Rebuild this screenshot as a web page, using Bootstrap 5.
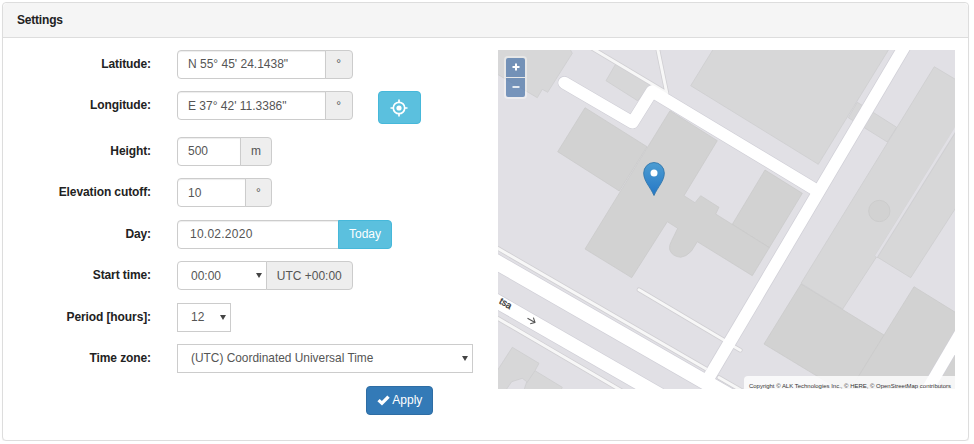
<!DOCTYPE html>
<html lang="en">
<head>
<meta charset="utf-8">
<title>Settings</title>
<meta name="viewport" content="width=device-width, initial-scale=1">
<link href="https://cdn.jsdelivr.net/npm/bootstrap@5.3.0/dist/css/bootstrap.min.css" rel="stylesheet">
<style>
body{font-family:"Liberation Sans",Arial,sans-serif;font-size:12px;color:#333;overflow:hidden}
.settings-panel{margin:2px 5px 0 2px;height:439px;border:1px solid #ddd;border-radius:4px;box-shadow:0 1px 1px rgba(0,0,0,.05)}
.settings-panel>.card-header{height:34.5px;padding:0 14px;background:#f5f5f5;border-color:#ddd;color:#222;line-height:34px;letter-spacing:-.2px}
.settings-panel>.card-body{padding:12.1px 13px 0 14px}
.settings-form{width:481px;row-gap:12.5px}
.field-row{min-height:29px}
.field-label{width:134px;margin-right:26px;line-height:29px;text-align:right;letter-spacing:-.1px;font-weight:700;color:#222;white-space:nowrap}
.field-row .input-group{height:29px;flex-wrap:nowrap}
.field-row .form-control,.field-row .form-select{height:29px;min-height:0;padding:0 10px;font-size:12px;color:#555;border:1px solid #ccc;border-radius:4px;box-shadow:inset 0 1px 1px rgba(0,0,0,.075)}
.field-row .form-select{background-image:none;padding-left:13px;border-radius:0;box-shadow:none}
.field-row .w-zone .form-select{font-size:11.9px}
.field-row .form-control.coord{padding-left:10px}
.field-row .input-group-text{justify-content:center;padding:0;font-size:12px;color:#555;background:#eee;border:1px solid #ccc;border-radius:4px}
.w-coord{width:175.5px}.w-coord .input-group-text{width:27.5px}
.w-height{width:95px}.w-height .input-group-text{width:32px}
.w-elev{width:95px}.w-elev .input-group-text{width:27px}
.w-day{width:215px}.w-day .btn{width:54px;border-radius:4px}
.w-day .form-control{letter-spacing:.25px;padding-left:12px}
.w-start{width:175.5px}.w-start .input-group-text{width:86.5px}
.w-period{width:54px}.w-zone{width:296px}
.select-wrap{position:relative}
.select-wrap::after{content:"";position:absolute;right:5px;top:12px;border:3px solid transparent;border-top:5px solid #444;border-bottom:0;pointer-events:none}
.w-start .select-wrap .form-select{border-radius:4px 0 0 4px}
.btn-sky{background:#5bc0de;border:1px solid #46b8da;color:#fff;padding:0;font-size:12px}
.btn-locate{width:43px;height:33px;margin-left:25px;border-radius:4px}
.btn-apply{width:67px;height:29px;margin-left:349px;padding:0;background:#337ab7;border:1px solid #2e6da4;border-radius:4px;color:#fff;font-size:12px;line-height:27px}
.map-view{width:457px;height:339px;overflow:hidden;background:#e1e0e5;position:relative}
.map-view>svg{display:block}
.zoom-box{position:absolute;left:6px;top:6px;padding:2px;background:rgba(255,255,255,.4);border-radius:4px;display:grid;gap:1px}
.zoom-box button{width:19px;height:19px;border:0;padding:0;background:rgba(0,60,136,.5);display:flex;align-items:center;justify-content:center}
.zoom-box button:first-child{border-radius:2px 2px 0 0}
.zoom-box button:last-child{border-radius:0 0 2px 2px}
</style>
<script src="https://cdn.jsdelivr.net/npm/bootstrap@5.3.0/dist/js/bootstrap.bundle.min.js"></script>
</head>
<body>
<div class="card settings-panel">
  <div class="card-header fw-bold">Settings</div>
  <div class="card-body d-flex">
    <form class="settings-form d-flex flex-column flex-shrink-0">
      <div class="field-row d-flex"><label class="field-label">Latitude:</label>
        <div class="input-group w-coord"><input class="form-control coord" value="N 55° 45' 24.1438&quot;"><span class="input-group-text">°</span></div></div>
      <div class="field-row d-flex"><label class="field-label">Longitude:</label>
        <div class="input-group w-coord"><input class="form-control coord" value="E 37° 42' 11.3386&quot;"><span class="input-group-text">°</span></div>
        <button type="button" class="btn btn-sky btn-locate d-flex align-items-center justify-content-center" aria-label="Locate">
          <svg width="18" height="18" viewBox="0 0 18 18" fill="none" stroke="#fff"><circle cx="9" cy="9" r="5.7" stroke-width="1.7"/><circle cx="9" cy="9" r="2.6" fill="#fff" stroke="none"/><path d="M9 .5v3M9 14.5v3M.5 9h3M14.5 9h3" stroke-width="1.7"/></svg>
        </button></div>
      <div class="field-row d-flex"><label class="field-label">Height:</label>
        <div class="input-group w-height"><input class="form-control coord" value="500"><span class="input-group-text">m</span></div></div>
      <div class="field-row d-flex"><label class="field-label">Elevation cutoff:</label>
        <div class="input-group w-elev"><input class="form-control coord" value="10"><span class="input-group-text">°</span></div></div>
      <div class="field-row d-flex"><label class="field-label">Day:</label>
        <div class="input-group w-day"><input class="form-control" value="10.02.2020"><button type="button" class="btn btn-sky">Today</button></div></div>
      <div class="field-row d-flex"><label class="field-label">Start time:</label>
        <div class="input-group w-start"><div class="select-wrap flex-fill"><select class="form-select"><option>00:00</option></select></div><span class="input-group-text">UTC +00:00</span></div></div>
      <div class="field-row d-flex"><label class="field-label">Period [hours]:</label>
        <div class="select-wrap w-period"><select class="form-select"><option>12</option></select></div></div>
      <div class="field-row d-flex"><label class="field-label">Time zone:</label>
        <div class="select-wrap w-zone"><select class="form-select"><option>(UTC) Coordinated Universal Time</option></select></div></div>
      <div class="field-row d-flex"><button type="button" class="btn btn-apply"><svg width="13" height="11" viewBox="0 0 13 11"><path d="M.4 6.2 2.7 3.9 4.9 6.1 10.3.5 12.7 2.8 5 10.6Z" fill="#fff"/></svg> Apply</button></div>
    </form>
    <div class="map-view flex-shrink-0">
      <svg width="457" height="339" viewBox="498 50 457 339">
        <g fill="#d7d7d8" stroke="#cbcbcd" stroke-width=".7">
          <path d="M497 49H570L572.3 53.3 547.7 92.3 542.3 89.3 537.3 97.7 497 74Z"/>
          <path d="M615.7 64 606 80.7 637.5 100.7 652 84Z"/>
          <path d="M713.3 49 690.7 85.7 818.3 164.3 889 49Z"/>
          <path d="M857.3 102.3 896.7 127.3 887.3 142 848.3 117.7Z"/>
          <path d="M934.3 66.7 956 79.7V207.5L910.7 277.7 876.7 256.7 842.7 309 801 283.3Z"/>
          <path d="M512.3 347.3 539 363.3 535 370.7 562.3 387.3 561 390H524L526.7 381.7 522.3 378.3 511.7 381.7 506 390H497V371Z"/>
          <path d="M535 370.7 526.7 383"/>
        </g>
        <path d="M956 129 876 257" stroke="#cfcfd2" stroke-width="3.6"/>
        <path d="M956 128 876 256.5" stroke="#e1e0e5" stroke-width="2.4"/>
        <g fill="#d2d2d2" stroke="#c8c8c9" stroke-width=".7">
          <circle cx="879.3" cy="211" r="10.7"/>
          <path d="M585 107.7 647 146.7 619.3 191 557.7 151.7Z"/>
          <path d="M765 170 802.3 193.3 769.3 247.7 732.3 224.3Z"/>
          <path d="M670 110.7 717.3 140.7 684 195.7 695 202.7 700.7 195.7 719 207.3 715.7 214 769.3 247.7 752.3 275.7 697.3 241.7 691.5 251Q686 257 680.7 257.3 672 256.5 669.6 249.5 669 245 671.5 241L677.7 228.3 667.3 221.7 631.7 277.7 585 249Z"/>
          <path d="M801 284 884 335 914 286.7 956 312.7V390H840L764 344Z"/>
          <path d="M884 335 850 390"/>
        </g>
        <g fill="none" stroke-linejoin="round">
          <g stroke="#d0cfd3" stroke-width="4.6">
            <path d="M590 47 667 93M657.3 47 667 94M496 247.3 706.7 369.3M496 317.3 622 391"/>
            <path d="M639 289.7 725 340.7M719 377.5 745 392.5M733 346 740.3 350.2" stroke-linecap="round"/>
          </g>
          <g stroke="#cfced6">
            <path d="M564.3 82.7 632.5 122.5 652 91.3 815 189.5" stroke-width="13.2" stroke-linecap="round"/>
            <path d="M904.8 46 705 384" stroke-width="13.6"/>
            <path d="M494 260.7 734 398.5" stroke-width="16.4"/>
            <path d="M494 299.7 660 395" stroke-width="15.2"/>
            <path d="M960 334 926 392" stroke-width="13"/>
          </g>
          <g stroke="#f7f7f7" stroke-width="3">
            <path d="M590 47 667 93M657.3 47 667 94M496 247.3 706.7 369.3M496 317.3 622 391"/>
            <path d="M639 289.7 725 340.7M719 377.5 745 392.5M733 346 740.3 350.2" stroke-linecap="round"/>
          </g>
          <g stroke="#fff">
            <path d="M564.3 82.7 632.5 122.5 652 91.3 815 189.5" stroke-width="12" stroke-linecap="round"/>
            <path d="M904.8 46 705 384" stroke-width="12.2"/>
            <path d="M494 260.7 734 398.5" stroke-width="15"/>
            <path d="M494 299.7 660 395" stroke-width="13.8"/>
            <path d="M960 334 926 392" stroke-width="11.8"/>
          </g>
          <path d="M527.5 318.3 535 322.5M533.4 317.6 535 322.5 530.2 323.8" stroke="#555" stroke-width="1.1"/>
        </g>
        <text transform="translate(498.6 303) rotate(30)" font-size="9.500" fill="#333" stroke="#333" stroke-width=".3">tsa</text>
        <defs><linearGradient id="pin" x1="0" y1="0" x2="0" y2="1"><stop offset="0" stop-color="#4d9dd2"/><stop offset="1" stop-color="#2577c6"/></linearGradient></defs>
        <path d="M654 195.5C650 186.500 643.700 181 643.700 173A10.300 10.500 0 0 1 664.300 173C664.300 181 658 186.500 654 195.500Z" fill="url(#pin)" stroke="#3277ac" stroke-width=".9"/>
        <circle cx="654" cy="173" r="3.5" fill="#fff"/>
        <path d="M744 390V380Q744 376 748 376H956V390Z" fill="#fff" fill-opacity=".8"/>
        <text x="749" y="387.600" font-size="6.200" fill="#333" textLength="202" lengthAdjust="spacingAndGlyphs">Copyright © ALK Technologies Inc., © HERE, © OpenStreetMap contributors</text>
      </svg>
      <div class="zoom-box">
        <button type="button" aria-label="Zoom in"><svg width="8" height="8" viewBox="0 0 8 8"><path d="M4 .5v7M.5 4h7" stroke="#fff" stroke-width="2"/></svg></button>
        <button type="button" aria-label="Zoom out"><svg width="8" height="8" viewBox="0 0 8 8"><path d="M.5 4h7" stroke="#fff" stroke-width="1.600"/></svg></button>
      </div>
    </div>
  </div>
</div>
</body>
</html>
